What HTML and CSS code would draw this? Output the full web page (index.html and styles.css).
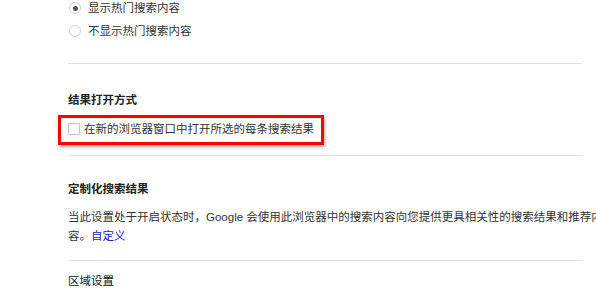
FILE: index.html
```html
<!DOCTYPE html>
<html lang="zh-CN">
<head>
  <meta charset="UTF-8" />
  <meta name="viewport" content="width=device-width, initial-scale=1.0"/>
  <title>搜索设置</title>
  <link rel="stylesheet" href="styles.css">
</head>
<body>

  <div class="settings">

    <section class="block block-hot">
      <label class="radio-row">
        <span class="radio checked"></span>
        显示热门搜索内容
      </label>
      <label class="radio-row">
        <span class="radio"></span>
        不显示热门搜索内容
      </label>
    </section>

    <section class="block block-open">
      <h3 class="block-title">结果打开方式</h3>
      <label class="check-row">
        <span class="checkbox"></span>
        在新的浏览器窗口中打开所选的每条搜索结果
        <span class="highlight"></span>
      </label>
    </section>

    <section class="block block-custom">
      <h3 class="block-title">定制化搜索结果</h3>
      <p class="block-text">当此设置处于开启状态时，Google 会使用此浏览器中的搜索内容向您提供更具相关性的搜索结果和推荐内容。<a href="#custom">自定义</a></p>
    </section>

    <section class="block block-region">
      <h3 class="block-title plain">区域设置</h3>
    </section>

  </div>

</body>
</html>
```

FILE: styles.css
```css
html, body {
  overflow: hidden;
}
body {
  margin: 0;
  font-family: "Liberation Sans", "Noto Sans CJK SC", sans-serif;
  font-size: 11.5px;
  color: #333;
  background: #fff;
}
.settings {
  padding-left: 68px;
  width: 515px;
}
.block {
  border-top: 1px solid #e3e3e3;
}
.block-hot {
  border-top: none;
  padding-bottom: 24px;
  display: flex;
  flex-direction: column;
  gap: 7px;
}
.block-open {
  padding: 28px 0 18px;
}
.block-custom {
  padding: 25px 0 14px;
}
.block-region {
  padding-top: 12px;
}
.block-title {
  margin: 0;
  font-size: 11.5px;
  line-height: 16px;
  font-weight: bold;
  color: #222;
}
.block-title.plain {
  font-weight: normal;
  color: #111;
}
.radio-row, .check-row {
  display: flex;
  align-items: center;
  line-height: 16px;
  white-space: nowrap;
}
.radio {
  box-sizing: border-box;
  width: 12px;
  height: 12px;
  margin: 0 7px 0 1px;
  border: 1px solid #d0d0d0;
  border-radius: 50%;
  display: flex;
  align-items: center;
  justify-content: center;
}
.radio.checked::after {
  content: "";
  width: 5px;
  height: 5px;
  border-radius: 50%;
  background: #555;
}
.check-row {
  position: relative;
  margin-top: 13px;
}
.checkbox {
  box-sizing: border-box;
  width: 12px;
  height: 12px;
  margin-right: 4px;
  border: 1px solid #c4c4c4;
  border-radius: 1px;
  background: #fff;
}
.highlight {
  position: absolute;
  left: -10px;
  top: -6px;
  width: 266px;
  height: 30px;
  box-sizing: border-box;
  border: 3px solid #f00;
  box-shadow: 1px 2px 3px rgba(0, 0, 0, 0.35);
}
.block-text {
  margin: 11px 0 0;
  width: 545px;
  line-height: 19px;
}
.block-text a {
  color: #2323c8;
  text-decoration: none;
}
```
